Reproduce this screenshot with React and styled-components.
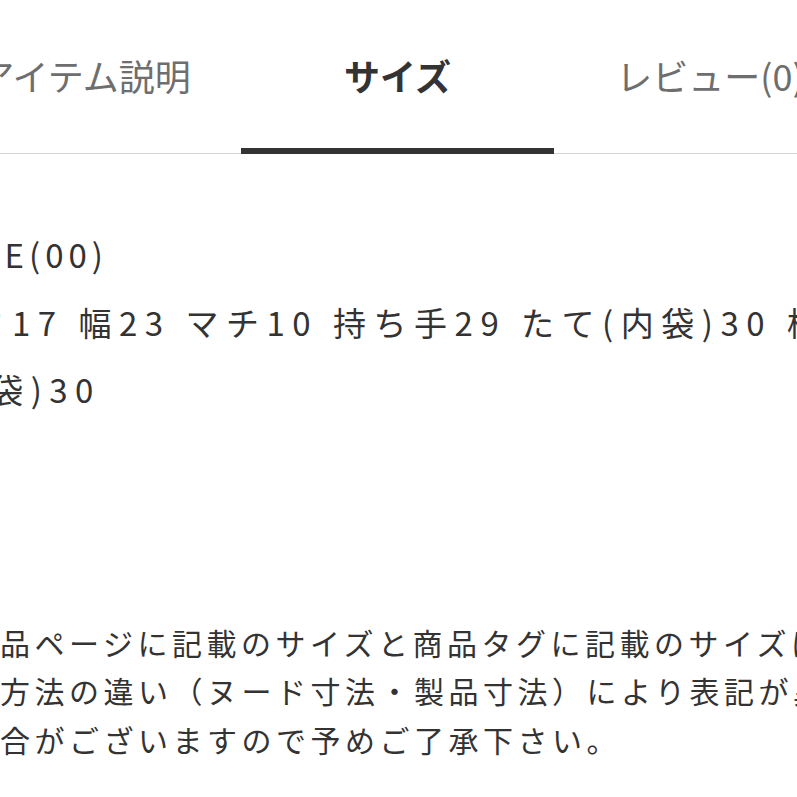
import React from 'react';
import styled, { createGlobalStyle } from 'styled-components';

const GlobalStyle = createGlobalStyle`
  html, body {
    margin: 0;
    padding: 0;
    background: #fff;
    overflow: hidden;
  }
  body {
    font-family: "Noto Sans CJK JP", "Noto Sans", sans-serif;
    color: #333;
  }
`;

const Page = styled.div`
  width: 797px;
  height: 797px;
  overflow: hidden;
`;

const Inner = styled.div`
  margin-left: -72px;
  width: 939px;
`;

const TabList = styled.ul`
  list-style: none;
  margin: 0;
  padding: 0;
  display: grid;
  grid-template-columns: repeat(3, 1fr);
  border-bottom: 1px solid #d6d6d6;
`;

const Tab = styled.li`
  height: 154px;
  box-sizing: border-box;
  display: flex;
  align-items: center;
  justify-content: center;
  padding-top: 2px;
  margin-bottom: -1px;
  font-size: 36px;
  font-weight: ${(p) => (p.$active ? 700 : 400)};
  color: ${(p) => (p.$active ? '#333' : '#6e6e6e')};
  border-bottom: 6px solid ${(p) => (p.$active ? '#333' : 'transparent')};
  white-space: nowrap;
`;

const Content = styled.section`
  padding: 67px 0 0 3px;
`;

const SizeName = styled.div`
  font-size: 33px;
  letter-spacing: 5px;
  line-height: 67.5px;
  color: #333;
`;

const SizeDetail = styled.div`
  font-size: 33px;
  letter-spacing: 7.5px;
  line-height: 67.5px;
  color: #333;
`;

const Notes = styled.p`
  margin: 194px 0 0;
  font-size: 30px;
  letter-spacing: 4.5px;
  line-height: 48.5px;
  color: #333;
`;

const tabs = [
  { label: 'アイテム説明' },
  { label: 'サイズ', active: true },
  { label: 'レビュー(0)' },
];

const App = () => {
  return (
    <Page>
      <GlobalStyle />
      <Inner>
        <TabList>
          {tabs.map((tab) => (
            <Tab key={tab.label} $active={tab.active}>
              {tab.label}
            </Tab>
          ))}
        </TabList>
        <Content>
          <SizeName>FREE(00)</SizeName>
          <SizeDetail>高さ17 幅23 マチ10 持ち手29 たて(内袋)30 横(内袋)30</SizeDetail>
          <Notes>
            ※商品ページに記載のサイズと商品タグに記載のサイズは、計測方法の違い（ヌード寸法・製品寸法）により表記が異なる場合がございますので予めご了承下さい。
          </Notes>
        </Content>
      </Inner>
    </Page>
  );
};

export default App;
